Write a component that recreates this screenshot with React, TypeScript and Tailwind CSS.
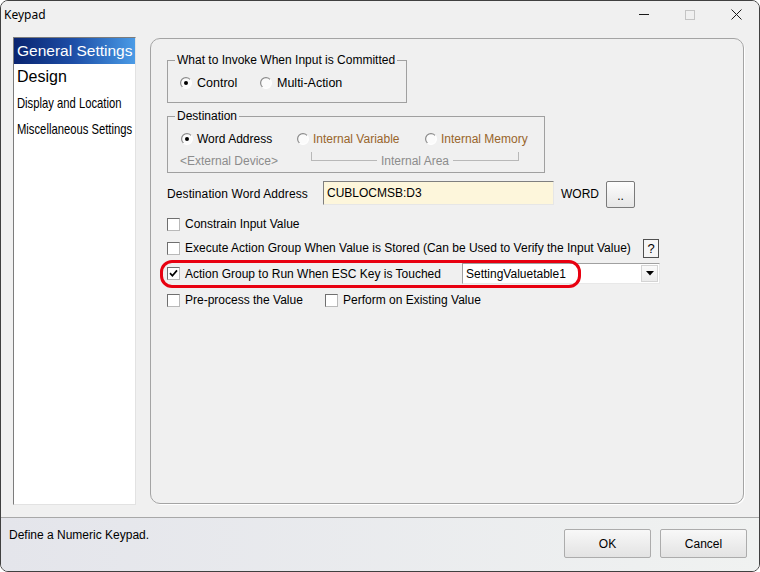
import React from "react";

function Radio({ checked }: { checked?: boolean }) {
  return (
    <svg width="12" height="12" viewBox="0 0 12 12" className="shrink-0">
      <defs>
        <linearGradient id="rg" x1="0" y1="0" x2="1" y2="1">
          <stop offset="0" stopColor="#7a7a7a" />
          <stop offset="0.5" stopColor="#9a9a9a" />
          <stop offset="0.55" stopColor="#ffffff" />
          <stop offset="1" stopColor="#ffffff" />
        </linearGradient>
      </defs>
      <circle cx="6" cy="6" r="5.4" fill="#fbfbfb" stroke="url(#rg)" strokeWidth="1.2" />
      {checked && <circle cx="6" cy="6" r="2" fill="#000" />}
    </svg>
  );
}

function Check({ checked }: { checked?: boolean }) {
  return (
    <span className="flex h-[13px] w-[13px] shrink-0 items-center justify-center border border-[#6f6f6f] border-b-[#b9b9b9] border-r-[#b9b9b9] bg-white">
      {checked && (
        <svg width="9" height="9" viewBox="0 0 9 9">
          <path d="M1 4.2 L3.4 6.8 L8 1.4" fill="none" stroke="#000" strokeWidth="1.7" />
        </svg>
      )}
    </span>
  );
}

function TitleBar() {
  return (
    <div className="flex h-[27px] items-center bg-[#f0f0f0] font-['Noto_Sans',sans-serif] text-[12px] text-black">
      <span className="pl-[3px]">Keypad</span>
      <div className="ml-auto flex h-full">
        <div className="flex w-[46px] items-center justify-center">
          <span className="h-px w-[10px] bg-[#1a1a1a]" />
        </div>
        <div className="flex w-[46px] items-center justify-center">
          <span className="h-[10px] w-[10px] border border-[#c4c4c4]" />
        </div>
        <div className="flex w-[46px] items-center justify-center">
          <svg width="11" height="11" viewBox="0 0 11 11">
            <path d="M0.5 0.5 L10.5 10.5 M10.5 0.5 L0.5 10.5" stroke="#1a1a1a" strokeWidth="1" />
          </svg>
        </div>
      </div>
    </div>
  );
}

function SideList() {
  return (
    <div className="h-[468px] w-[123px] shrink-0 overflow-hidden border border-[#7c7c7c] border-b-[#e2e2e2] border-r-[#e2e2e2] bg-white">
      <div className="flex h-[26px] items-center bg-gradient-to-r from-[#0a2470] via-[#1e4fa8] to-[#4b9be6] pl-[3px] text-[15.5px] text-white">
        General Settings
      </div>
      <div className="flex h-[26px] items-center pl-[3px] text-[16px]">Design</div>
      <div className="flex h-[26px] origin-left scale-x-75 items-center pl-[4px] text-[15px]">
        Display and Location
      </div>
      <div className="flex h-[26px] origin-left scale-x-75 items-center pl-[4px] text-[15px]">
        Miscellaneous Settings
      </div>
    </div>
  );
}

function Panel() {
  return (
    <div className="ml-[14px] mt-[1px] h-[466px] w-[594px] rounded-[10px] border border-[#a4a4a4] pl-[16px] shadow-[1px_1px_0_#ffffff]">
      {/* What to invoke */}
      <fieldset className="mt-[14px] w-[240px] border border-[#a0a0a0]">
        <legend className="ml-[7px] px-[2px] leading-[14px]">What to Invoke When Input is Committed</legend>
        <div className="mb-[12px] mt-[9px] flex h-[14px] items-center pl-[12px] text-[12.5px]">
          <div className="flex w-[80px] items-center gap-[5px]">
            <Radio checked />
            <span>Control</span>
          </div>
          <div className="flex items-center gap-[5px]">
            <Radio />
            <span>Multi-Action</span>
          </div>
        </div>
      </fieldset>

      {/* Destination */}
      <fieldset className="mt-[6px] w-[378px] border border-[#a0a0a0]">
        <legend className="ml-[7px] px-[2px] leading-[14px]">Destination</legend>
        <div className="mt-[9px] flex h-[14px] items-center pl-[13px]">
          <div className="flex w-[116px] items-center gap-[4px]">
            <Radio checked />
            <span>Word Address</span>
          </div>
          <div className="flex w-[128px] items-center gap-[4px]">
            <Radio />
            <span className="text-[#98652b]">Internal Variable</span>
          </div>
          <div className="flex items-center gap-[4px]">
            <Radio />
            <span className="text-[#98652b]">Internal Memory</span>
          </div>
        </div>
        <div className="mb-[4px] mt-[8px] flex h-[14px] items-start pl-[12px] text-[#8c8c8c]">
          <span className="w-[131px] leading-[14px]">&lt;External Device&gt;</span>
          <div className="flex h-[14px] w-[208px] items-start">
            <span className="-mt-[2px] h-[9px] flex-1 border-b border-l border-[#b8b8b8]" />
            <span className="px-[4px] leading-[14px]">Internal Area</span>
            <span className="-mt-[2px] h-[9px] flex-1 border-b border-r border-[#b8b8b8]" />
          </div>
        </div>
      </fieldset>

      {/* Destination word address */}
      <div className="mt-[8px] flex h-[27px] items-start">
        <span className="flex h-[25px] w-[156px] items-center tracking-[0.1px]">Destination Word Address</span>
        <div className="flex h-[24px] w-[231px] items-center border border-[#7f7f7f] border-b-[#e6e6e6] border-r-[#e6e6e6] bg-[#fdf6db] pl-[3px]">
          CUBLOCMSB:D3
        </div>
        <span className="ml-[7px] flex h-[25px] items-center">WORD</span>
        <button className="ml-[7px] flex h-[27px] w-[29px] items-end justify-center rounded-[2px] border border-[#7a7a7a] bg-gradient-to-b from-[#fdfdfd] to-[#e6e6e6] pb-[6px] leading-[10px]">
          ..
        </button>
      </div>

      {/* Options */}
      <div className="mt-[6px] flex h-[20px] items-center gap-[5px]">
        <Check />
        <span>Constrain Input Value</span>
      </div>
      <div className="mt-[4px] flex h-[20px] items-center">
        <Check />
        <span className="ml-[5px] w-[458px]">Execute Action Group When Value is Stored (Can be Used to Verify the Input Value)</span>
        <button className="flex h-[19px] w-[16px] items-center justify-center border border-[#505050] bg-[#f6f6f6] text-[13px] leading-none">
          ?
        </button>
      </div>
      <div className="relative mt-[2px] flex h-[27px] items-center">
        <Check checked />
        <span className="ml-[5px] w-[277px]">Action Group to Run When ESC Key is Touched</span>
        <div className="flex h-[21px] w-[198px] items-center border border-[#a0a0a0] border-b-[#e8e8e8] border-r-[#e8e8e8] bg-white">
          <span className="flex-1 pl-[3px]">SettingValuetable1</span>
          <span className="mr-px flex h-[17px] w-[17px] items-center justify-center border border-[#d4d4d4] bg-gradient-to-b from-[#fafafa] to-[#ececec]">
            <svg width="8" height="5" viewBox="0 0 8 5">
              <path d="M0 0 H8 L4 4.5 Z" fill="#000" />
            </svg>
          </span>
        </div>
        <div className="absolute -left-[7px] top-0 h-[28px] w-[421px] rounded-[12px] border-[3px] border-[#e80010]" />
      </div>
      <div className="mt-[3px] flex h-[20px] items-center">
        <Check />
        <span className="ml-[5px] w-[140px]">Pre-process the Value</span>
        <Check />
        <span className="ml-[5px]">Perform on Existing Value</span>
      </div>
    </div>
  );
}

function BottomBar() {
  return (
    <div className="flex h-[54px] border-t border-[#a8a8a8] bg-gradient-to-r from-[#e4e5eb] to-[#f0f2f1] pl-[8px] pr-[12px]">
      <span className="pt-[10px] leading-[14px]">Define a Numeric Keypad.</span>
      <div className="ml-auto mt-[11px] flex gap-[9px]">
        <button className="h-[29px] w-[87px] rounded-[2px] border border-[#acacac] bg-gradient-to-b from-[#f8f8f8] to-[#e3e3e3]">OK</button>
        <button className="h-[29px] w-[87px] rounded-[2px] border border-[#acacac] bg-gradient-to-b from-[#f8f8f8] to-[#e3e3e3]">Cancel</button>
      </div>
    </div>
  );
}

export default function App() {
  return (
    <div className="flex h-[572px] w-[760px] flex-col overflow-hidden rounded-[8px] border border-[#404040] bg-[#f0f0f0] font-['Liberation_Sans',Arial,sans-serif] text-[12px] whitespace-nowrap text-black">
      <TitleBar />
      <div className="flex h-[489px] pl-[12px] pt-[9px]">
        <SideList />
        <Panel />
      </div>
      <BottomBar />
    </div>
  );
}
